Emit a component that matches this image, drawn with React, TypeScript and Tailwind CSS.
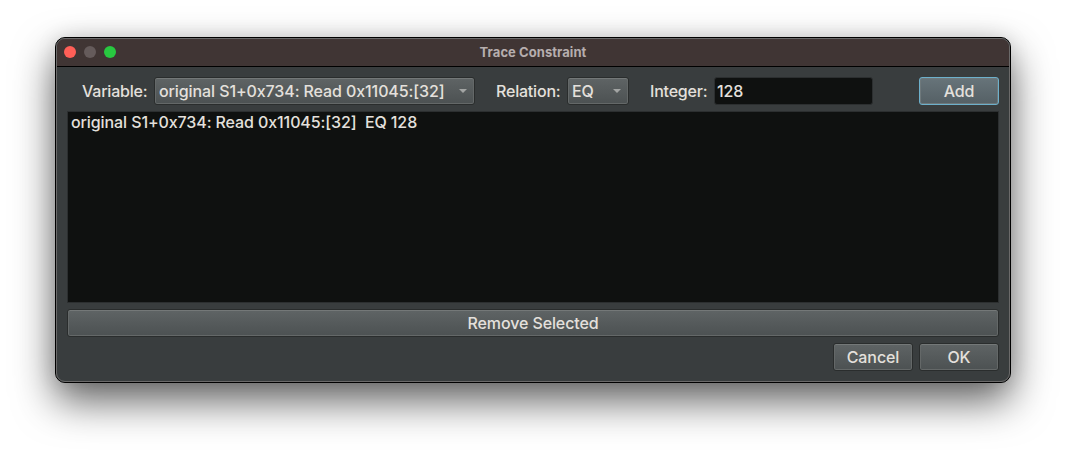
import type { ReactNode } from "react";

const raised =
  "border border-[#2a2d2d] rounded-[3px] bg-linear-to-b from-[#5f6465] to-[#4c5152] shadow-[inset_0_1px_0_#747878,inset_1px_0_0_#646868,inset_-1px_0_0_#646868,inset_0_-1px_0_#646868]";

const focused =
  "border border-[#6db0cb] rounded-[3px] bg-linear-to-b from-[#67747a] to-[#556065] shadow-[inset_0_0_0_1px_#6e787b]";

function Button({ children, primary = false, className = "w-20" }: { children: ReactNode; primary?: boolean; className?: string }) {
  return (
    <button className={`flex h-7 shrink-0 items-center justify-center ${primary ? focused : raised} ${className}`}>
      {children}
    </button>
  );
}

function Combo({ value, className }: { value: string; className: string }) {
  return (
    <div className={`flex h-7 shrink-0 items-center justify-between pl-1 pr-[7px] ${raised} ${className}`}>
      <span className="whitespace-pre">{value}</span>
      <svg width="8" height="4" viewBox="0 0 8 4" className="shrink-0">
        <path d="M0 0H8L4 4Z" fill="#a3a5a4" />
      </svg>
    </div>
  );
}

export default function App() {
  return (
    <div className="h-[456px] w-[1066px] overflow-hidden bg-white pl-[55px] pt-[37px]">
      <div className="flex h-[346px] w-[956px] flex-col rounded-[10px] border border-black bg-[#393d3e] font-['Inter',sans-serif] text-base font-medium leading-5 tracking-[-0.1px] text-[#e4e0dc] shadow-[0_18px_40px_rgba(0,0,0,0.62),0_0px_20px_rgba(0,0,0,0.1)]">
        <div className="flex min-h-0 flex-1 flex-col rounded-[9px] border border-[#6b6a6a]">
          <div className="grid h-7 shrink-0 grid-cols-[1fr_auto_1fr] items-center rounded-t-[8px] border-b border-black bg-[#403534] px-[7px] pb-px">
            <div className="flex gap-2">
              <span className="size-3 rounded-full bg-[#ff5f57]" />
              <span className="size-3 rounded-full bg-[#655b5b]" />
              <span className="size-3 rounded-full bg-[#28c840]" />
            </div>
            <span className="text-[13px] font-bold leading-4 tracking-[0.06px] text-[#b6aeae]">Trace Constraint</span>
            <span />
          </div>
          <div className="flex flex-1 flex-col gap-1.5 px-2.5 pt-2.5">
            <div className="flex items-center">
              <span className="w-[87px] shrink-0 pl-[15px] tracking-[-0.2px]">Variable:</span>
              <Combo className="w-[321px]" value="original S1+0x734: Read 0x11045:[32]" />
              <span className="ml-[21px] w-[71px] shrink-0 tracking-[-0.2px]">Relation:</span>
              <Combo className="w-[62px]" value="EQ" />
              <span className="ml-[21px] w-16 shrink-0 tracking-[-0.2px]">Integer:</span>
              <div className="flex h-7 w-[159px] items-center rounded-[3px] border border-[#2c2f30] bg-[#0f1110] pl-0.5">128</div>
              <Button primary className="ml-auto w-20">Add</Button>
            </div>
            <div className="h-48 border border-[#2c2f30] bg-[#0f1110] pl-[3px]">
              <span className="block whitespace-pre">original S1+0x734: Read 0x11045:[32]  EQ 128</span>
            </div>
            <Button className="w-full">Remove Selected</Button>
            <div className="flex justify-end gap-1.5">
              <Button>Cancel</Button>
              <Button>OK</Button>
            </div>
          </div>
        </div>
      </div>
    </div>
  );
}
